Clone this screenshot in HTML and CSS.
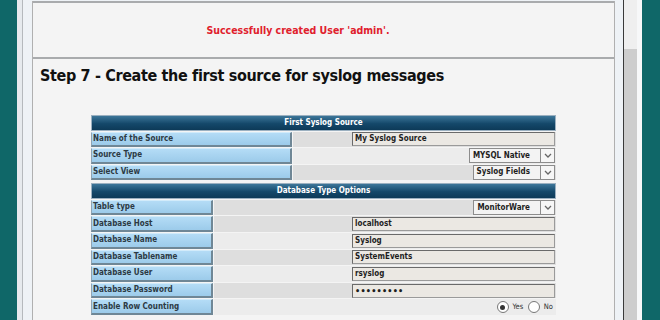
FILE: index.html
```html
<!DOCTYPE html>
<html lang="en">
<head>
    <meta charset="UTF-8">
    <title>Install - Step 7</title>
    <link rel="stylesheet" href="styles.css">
</head>
<body>
    <div class="desktop">
        <div class="window">
            <div class="viewport">
                <div class="page">
                    <div class="msgbox">
                        <span class="success">Successfully created User 'admin'.</span>
                    </div>

                    <h1>Step 7 - Create the first source for syslog messages</h1>

                    <table class="form first">
                        <tr><th colspan="2">First Syslog Source</th></tr>
                        <tr>
                            <td class="label">Name of the Source</td>
                            <td class="value dark"><span class="input">My Syslog Source</span></td>
                        </tr>
                        <tr>
                            <td class="label">Source Type</td>
                            <td class="value"><span class="select">MYSQL Native<span class="arrow"><svg width="8" height="5" viewBox="0 0 8 5"><path d="M1 1l3 3 3-3" fill="none" stroke="#666" stroke-width="1.3"/></svg></span></span></td>
                        </tr>
                        <tr>
                            <td class="label">Select View</td>
                            <td class="value dark"><span class="select">Syslog Fields<span class="arrow"><svg width="8" height="5" viewBox="0 0 8 5"><path d="M1 1l3 3 3-3" fill="none" stroke="#666" stroke-width="1.3"/></svg></span></span></td>
                        </tr>
                    </table>

                    <table class="form second">
                        <tr><th colspan="2">Database Type Options</th></tr>
                        <tr>
                            <td class="label">Table type</td>
                            <td class="value dark"><span class="select">MonitorWare<span class="arrow"><svg width="8" height="5" viewBox="0 0 8 5"><path d="M1 1l3 3 3-3" fill="none" stroke="#666" stroke-width="1.3"/></svg></span></span></td>
                        </tr>
                        <tr>
                            <td class="label">Database Host</td>
                            <td class="value dark"><span class="input">localhost</span></td>
                        </tr>
                        <tr>
                            <td class="label">Database Name</td>
                            <td class="value"><span class="input">Syslog</span></td>
                        </tr>
                        <tr>
                            <td class="label">Database Tablename</td>
                            <td class="value dark"><span class="input">SystemEvents</span></td>
                        </tr>
                        <tr>
                            <td class="label">Database User</td>
                            <td class="value"><span class="input">rsyslog</span></td>
                        </tr>
                        <tr>
                            <td class="label">Database Password</td>
                            <td class="value dark"><span class="input password">&bull;&bull;&bull;&bull;&bull;&bull;&bull;&bull;&bull;</span></td>
                        </tr>
                        <tr>
                            <td class="label">Enable Row Counting</td>
                            <td class="value">
                                <span class="radio checked"></span><span class="radio-label">Yes</span>
                                <span class="radio"></span><span class="radio-label">No</span>
                            </td>
                        </tr>
                    </table>
                </div>
            </div>
            <div class="scrollbar"><div class="track-top"></div></div>
        </div>
    </div>
</body>
</html>
```

FILE: styles.css
```css
html, body {
    margin: 0;
    padding: 0;
}

body {
    font-family: 'DejaVu Sans', Tahoma, sans-serif;
    font-stretch: condensed;
    background: #0f6768;
    overflow: hidden;
}

.desktop {
    height: 320px;
    padding: 0 18px 0 17px;
    display: flex;
}

.window {
    flex: 1;
    display: flex;
    background: #eef2f6;
    border-left: 5px solid #e6eaee;
}

.viewport {
    flex: 1;
    border-left: 1px solid #b5b9bd;
    border-right: 1px solid #3a3a3a;
    padding: 0 8px 0 9px;
}

.page {
    height: 100%;
    background: #f4f4f4;
    border-left: 1px solid #b0b0b0;
    border-right: 1px solid #b0b0b0;
}

.scrollbar {
    width: 13px;
    background: #cdcdcd;
    border-right: 5px solid #f7f8f9;
}

.track-top {
    height: 49px;
    background: #efefef;
}

.msgbox {
    margin-top: 1px;
    height: 54px;
    border-top: 2px solid #a9abad;
    border-bottom: 2px solid #a9abad;
    display: flex;
    align-items: center;
    justify-content: center;
    padding-right: 51px;
}

.success {
    color: #e0202c;
    font-size: 10.5px;
    font-weight: bold;
}

h1 {
    font-size: 16px;
    letter-spacing: -0.35px;
    font-weight: bold;
    color: #111;
    margin: 0;
    padding: 6px 0 0 7px;
    line-height: 22px;
}

.form {
    width: 467px;
    margin: 0 auto;
    border-collapse: separate;
    border-spacing: 1px;
    font-size: 8px;
    font-weight: bold;
    line-height: 10px;
}

.first {
    margin-top: 27px;
}

.second {
    margin-top: 1px;
}

.form th {
    height: 13.5px;
    padding: 0;
    color: #fff;
    background: linear-gradient(#3d7699, #14486a 55%, #0d3a58);
    border: 1px solid #9bb0c0;
}

.form td {
    height: 15.6px;
    padding: 0;
}

.label {
    color: #2c3a44;
    padding-left: 1px !important;
    background: linear-gradient(#b4dcf6, #9ccbea);
    border-top: 1px solid #d2ebfa;
    border-left: 1px solid #8fa4b3;
    border-right: 2px solid #6f8796;
    border-bottom: 2px solid #6f8796;
    height: 12.6px !important;
}

.first .label {
    width: 197px;
}

.second .label {
    width: 118px;
}

.value {
    background: #ececec;
    text-align: right;
    padding-right: 1px !important;
}

.value.dark {
    background: #dedede;
}

.input {
    display: inline-block;
    width: 199px;
    height: 12px;
    line-height: 12px;
    padding-left: 2px;
    text-align: left;
    background: #ebe8e3;
    border: 1px solid #6a6a6a;
    border-right-color: #9a9a9a;
    border-bottom-color: #9a9a9a;
    color: #1e1e1e;
    vertical-align: middle;
}

.password {
    font-size: 9px;
    letter-spacing: 0.2px;
}

.select {
    display: inline-flex;
    align-items: center;
    height: 13px;
    padding-left: 3px;
    background: #f3f3f3;
    border: 1px solid #8c8c8c;
    color: #1e1e1e;
    vertical-align: middle;
}

.arrow {
    display: inline-flex;
    align-items: center;
    justify-content: center;
    width: 13px;
    height: 13px;
    margin-left: 10px;
    border-left: 1px solid #8c8c8c;
    background: #f6f6f6;
}

.radio {
    display: inline-block;
    width: 10px;
    height: 10px;
    border: 1px solid #777;
    border-radius: 50%;
    background: #fff;
    vertical-align: middle;
    position: relative;
}

.radio.checked::after {
    content: "";
    position: absolute;
    left: 2.5px;
    top: 2.5px;
    width: 5px;
    height: 5px;
    border-radius: 50%;
    background: #333;
}

.radio-label {
    font-weight: normal;
    font-size: 7.5px;
    color: #333;
    margin: 0 2px 0 4px;
    vertical-align: middle;
}
```
